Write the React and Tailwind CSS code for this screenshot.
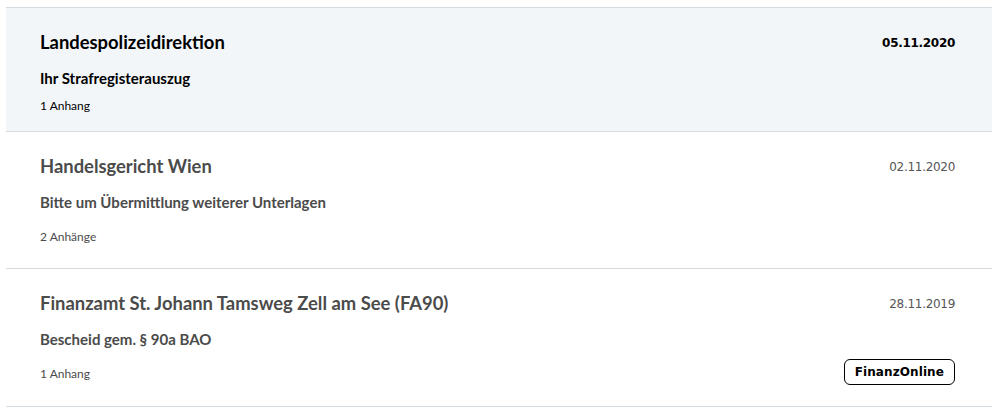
const messages = [
  {
    sender: "Landespolizeidirektion",
    subject: "Ihr Strafregisterauszug",
    attachments: "1 Anhang",
    date: "05.11.2020",
    unread: true,
  },
  {
    sender: "Handelsgericht Wien",
    subject: "Bitte um Übermittlung weiterer Unterlagen",
    attachments: "2 Anhänge",
    date: "02.11.2020",
  },
  {
    sender: "Finanzamt St. Johann Tamsweg Zell am See (FA90)",
    subject: "Bescheid gem. § 90a BAO",
    attachments: "1 Anhang",
    date: "28.11.2019",
    badge: "FinanzOnline",
  },
];

function MessageRow({ msg }) {
  return (
    <li
      className={
        msg.unread
          ? "flex justify-between bg-[#f3f6f9] border-b border-[#d3dbe1] pl-[34px] pr-[37px] pt-[22px] pb-[17px] text-black"
          : "flex justify-between border-b border-[#d3dbe1] pl-[34px] pr-[37px] pt-[22px] pb-[23px] last:pb-[24px] text-[#4b4b4b]"
      }
    >
      <div className="flex flex-col">
        <h3 className="h-[24px] text-[18.4px] leading-[24px] font-bold">{msg.sender}</h3>
        <p className="mt-[14px] h-[20px] text-[15px] leading-[20px] font-bold">{msg.subject}</p>
        <p className={msg.unread ? "mt-[10px] h-[16px] text-[12px] leading-[16px]" : "mt-[17px] h-[16px] text-[12px] leading-[16px]"}>
          {msg.attachments}
        </p>
      </div>
      <div className="flex flex-col items-end justify-between">
        <span
          className={
            msg.unread
              ? "mt-[4px] font-['DejaVu_Sans',sans-serif] text-[12px] font-bold tracking-[-0.3px]"
              : "mt-[4px] font-['DejaVu_Sans',sans-serif] text-[12px] text-[#555] tracking-[-0.3px]"
          }
        >
          {msg.date}
        </span>
        {msg.badge && (
          <span className="mb-[-3px] rounded-[6px] border border-black px-[10px] py-[3px] font-['DejaVu_Sans',sans-serif] text-[12px] leading-[18px] font-bold tracking-[0.1px] text-black">
            {msg.badge}
          </span>
        )}
      </div>
    </li>
  );
}

export default function App() {
  return (
    <div className="min-h-[415px] bg-white px-[6px] pt-[7px] font-['Lato',sans-serif]">
      <ul className="border-t border-[#d3dbe1]">
        {messages.map((m) => (
          <MessageRow key={m.sender} msg={m} />
        ))}
      </ul>
    </div>
  );
}
